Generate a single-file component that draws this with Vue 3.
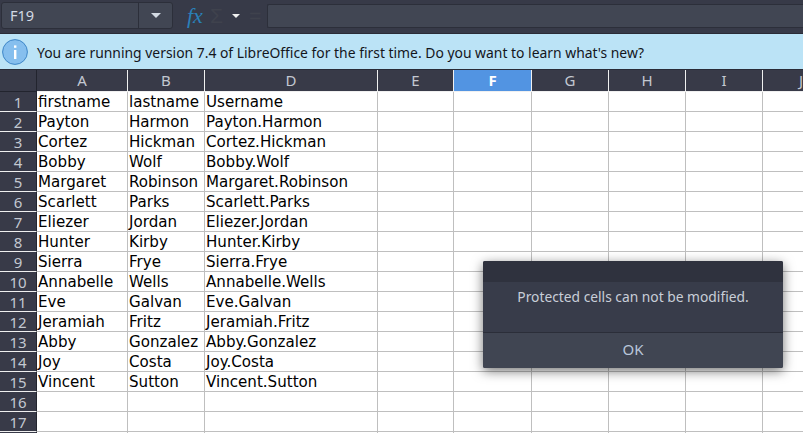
<template>
  <div class="app">
    <div class="toolbar">
      <div class="name-box">
        <span class="name-text">F19</span>
        <span class="name-drop"><i class="caret"></i></span>
      </div>
      <span class="fx">fx</span>
      <span class="sigma">Σ</span>
      <i class="caret small"></i>
      <span class="equal">=</span>
      <div class="formula"></div>
    </div>

    <div class="infobar">
      <svg class="info-icon" width="26" height="26" viewBox="0 0 26 26">
        <circle cx="13" cy="13" r="12.4" fill="#86bfee" stroke="#3e87c8" stroke-width="1" />
        <rect x="12" y="11" width="2.4" height="9" fill="#fff" />
        <rect x="12" y="6.4" width="2.4" height="2.4" fill="#fff" />
      </svg>
      <span class="info-text">You are running version 7.4 of LibreOffice for the first time. Do you want to learn what's new?</span>
    </div>

    <div class="sheet">
      <div class="corner"></div>
      <div
        v-for="col in columns"
        :key="col"
        class="col-head"
        :class="{ active: col === 'F' }"
      >{{ col }}</div>

      <template v-for="(row, i) in rows" :key="i">
        <div class="row-head">{{ i < 17 ? i + 1 : '' }}</div>
        <div class="cell" v-for="(val, j) in row" :key="j">{{ val }}</div>
      </template>
    </div>

    <div class="dialog">
      <div class="dialog-title"></div>
      <div class="dialog-body">Protected cells can not be modified.</div>
      <div class="dialog-btn">OK</div>
    </div>
  </div>
</template>

<script setup>
const columns = ['A', 'B', 'D', 'E', 'F', 'G', 'H', 'I', 'J']

const people = [
  ['firstname', 'lastname', 'Username'],
  ['Payton', 'Harmon'],
  ['Cortez', 'Hickman'],
  ['Bobby', 'Wolf'],
  ['Margaret', 'Robinson'],
  ['Scarlett', 'Parks'],
  ['Eliezer', 'Jordan'],
  ['Hunter', 'Kirby'],
  ['Sierra', 'Frye'],
  ['Annabelle', 'Wells'],
  ['Eve', 'Galvan'],
  ['Jeramiah', 'Fritz'],
  ['Abby', 'Gonzalez'],
  ['Joy', 'Costa'],
  ['Vincent', 'Sutton'],
  ['', ''],
  ['', ''],
  ['', '']
]

const rows = people.map((p) => {
  const user = p[2] || (p[0] ? p[0] + '.' + p[1] : '')
  return [p[0], p[1], user, '', '', '', '', '', '']
})
</script>

<style>
html, body {
  margin: 0;
  overflow: hidden;
  background: #fff;
}
</style>

<style scoped>
.app {
  position: relative;
  width: 803px;
  height: 433px;
  overflow: hidden;
  font-family: "Noto Sans", sans-serif;
}

.toolbar {
  height: 34px;
  box-sizing: border-box;
  padding: 2px 0 4px 1px;
  background: #373a48;
  border-bottom: 1px solid #2a2c37;
  display: flex;
  align-items: center;
}

.name-box {
  width: 172px;
  height: 27px;
  box-sizing: border-box;
  display: flex;
  background: #414653;
  border: 1px solid #2c2f3a;
  border-radius: 3px;
  color: #d3dae3;
  font-size: 14.5px;
}

.name-text {
  flex: 1;
  padding-left: 8px;
  line-height: 25px;
}

.name-drop {
  width: 33px;
  border-left: 1px solid #2c2f3a;
  display: flex;
  align-items: center;
  justify-content: center;
}

.caret {
  display: block;
  width: 0;
  height: 0;
  border-left: 5px solid transparent;
  border-right: 5px solid transparent;
  border-top: 5px solid #d3dae3;
}

.caret.small {
  margin-left: 6px;
  border-left-width: 4px;
  border-right-width: 4px;
  border-top-width: 4px;
  border-top-color: #f0f0f0;
}

.fx {
  margin-left: 14px;
  width: 16px;
  color: #2a80b9;
  font-family: "Liberation Serif", serif;
  font-style: italic;
  font-size: 22px;
  line-height: 26px;
}

.sigma {
  margin-left: 7px;
  width: 16px;
  color: #3f424d;
  font-family: "Liberation Sans", sans-serif;
  font-size: 21px;
  line-height: 26px;
}

.equal {
  margin-left: 9px;
  width: 13px;
  color: #3f424d;
  font-family: "Liberation Sans", sans-serif;
  font-size: 21px;
  line-height: 26px;
}

.formula {
  flex: 1;
  height: 24px;
  margin-left: 5px;
  box-sizing: border-box;
  background: #414653;
  border: 1px solid #2c2f3a;
  border-right: none;
  border-radius: 2px 0 0 2px;
}

.infobar {
  height: 36px;
  box-sizing: border-box;
  background: #bbe3f6;
  border-bottom: 1px solid #2a2c37;
  display: flex;
  align-items: center;
  padding-left: 2px;
  gap: 9px;
  font-size: 13.9px;
  color: #14161c;
}

.info-icon {
  flex: none;
}

.info-text {
  padding-top: 2px;
}

.sheet {
  display: grid;
  grid-template-columns: 37px 91px 77px 173px 76px 78px 77px 77px 77px 77px;
  grid-template-rows: 22px repeat(18, 20px);
}

.corner,
.col-head {
  background: #383a48;
  border-right: 1px solid #f0f0f0;
  border-bottom: 1px solid #f0f0f0;
  box-sizing: border-box;
}

.corner {
  border-right-color: #22242e;
  border-bottom-color: #22242e;
}

.col-head {
  color: #c3c8d1;
  font-size: 15px;
  line-height: 21px;
  text-align: center;
}

.col-head.active {
  background: #5294e2;
  color: #fff;
  font-weight: 700;
}

.row-head {
  background: #383a48;
  color: #c3c8d1;
  font-size: 15px;
  line-height: 20px;
  text-align: center;
  box-sizing: border-box;
  border-bottom: 1px solid #f0f0f0;
  border-right: 1px solid #22242e;
}

.cell {
  box-sizing: border-box;
  border-right: 1px solid #bfbfbf;
  border-bottom: 1px solid #bfbfbf;
  padding-left: 1px;
  font-family: "DejaVu Sans", sans-serif;
  font-size: 15.1px;
  line-height: 20px;
  color: #000;
  white-space: nowrap;
  background: #fff;
}

.dialog {
  position: absolute;
  left: 483px;
  top: 261px;
  width: 300px;
  height: 107px;
  display: flex;
  flex-direction: column;
  background: #383c4a;
  border-radius: 2px;
  box-shadow: 0 3px 12px rgba(0, 0, 0, 0.55);
  color: #c8ced8;
  font-size: 13.8px;
}

.dialog-title {
  height: 21px;
  background: #2f323e;
  border-radius: 2px 2px 0 0;
}

.dialog-body {
  flex: 1;
  text-align: center;
  padding-top: 5px;
}

.dialog-btn {
  height: 36px;
  box-sizing: border-box;
  background: #404552;
  border-top: 1px solid #2b2e39;
  border-radius: 0 0 2px 2px;
  text-align: center;
  line-height: 33px;
  font-size: 15px;
  color: #b9c6da;
}
</style>
